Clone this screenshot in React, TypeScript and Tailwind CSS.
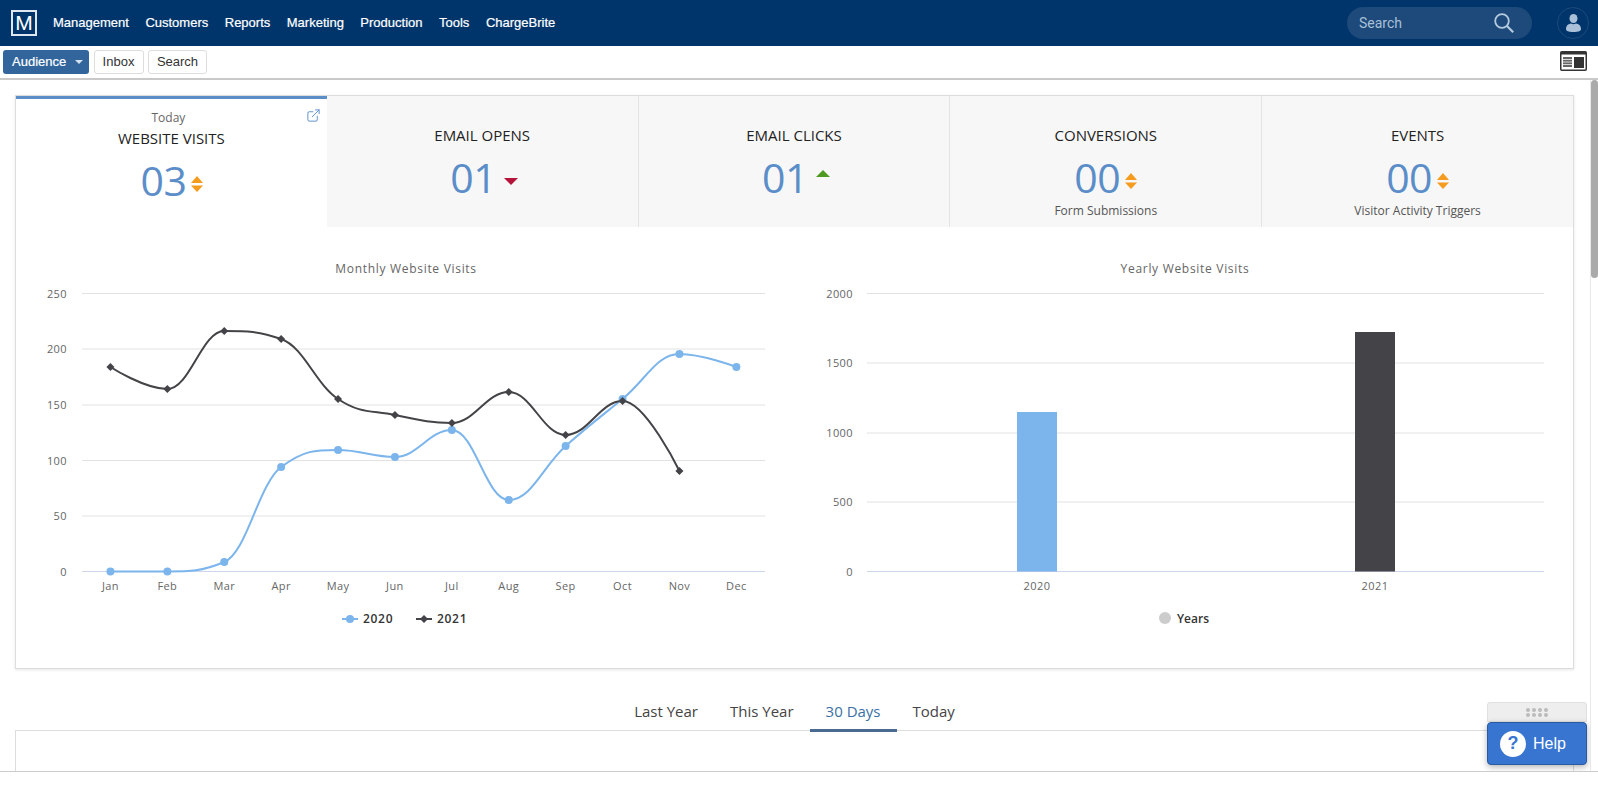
import { ExternalLink } from "lucide-react";

const navItems = ["Management", "Customers", "Reports", "Marketing", "Production", "Tools", "ChargeBrite"];
const months = ["Jan", "Feb", "Mar", "Apr", "May", "Jun", "Jul", "Aug", "Sep", "Oct", "Nov", "Dec"];
const monthX = months.map((_, i) => 82 + 56.9 * (i + 0.5));

const visits2020 = [571.5, 571.5, 562, 467, 450, 457, 430, 500, 446, 399, 354, 367];
const visits2021 = [367, 389, 331, 339, 399, 415, 423, 392, 435, 401, 471];

const leftAxis = [
  { label: "250", y: 293.5 },
  { label: "200", y: 349 },
  { label: "150", y: 405 },
  { label: "100", y: 460.5 },
  { label: "50", y: 516 },
  { label: "0", y: 571.5 },
];
const rightAxis = [
  { label: "2000", y: 293.5 },
  { label: "1500", y: 363 },
  { label: "1000", y: 433 },
  { label: "500", y: 502 },
  { label: "0", y: 571.5 },
];

// same smoothing the chart library uses for spline series
function splinePath(ys: number[]) {
  const pts = ys.map((y, i) => ({ x: monthX[i], y }));
  const conts = pts.map((p, i) => {
    const last = pts[i - 1];
    const next = pts[i + 1];
    if (!last || !next) return { lx: p.x, ly: p.y, rx: p.x, ry: p.y };
    const lx = (1.5 * p.x + last.x) / 2.5;
    let ly = (1.5 * p.y + last.y) / 2.5;
    const rx = (1.5 * p.x + next.x) / 2.5;
    let ry = (1.5 * p.y + next.y) / 2.5;
    const correction = ((ry - ly) * (rx - p.x)) / (rx - lx) + p.y - ry;
    ly += correction;
    ry += correction;
    if (ly > last.y && ly > p.y) {
      ly = Math.max(last.y, p.y);
      ry = 2 * p.y - ly;
    } else if (ly < last.y && ly < p.y) {
      ly = Math.min(last.y, p.y);
      ry = 2 * p.y - ly;
    }
    if (ry > next.y && ry > p.y) {
      ry = Math.max(next.y, p.y);
      ly = 2 * p.y - ry;
    } else if (ry < next.y && ry < p.y) {
      ry = Math.min(next.y, p.y);
      ly = 2 * p.y - ry;
    }
    return { lx, ly, rx, ry };
  });
  return pts
    .map((p, i) =>
      i === 0
        ? `M ${p.x} ${p.y}`
        : `C ${conts[i - 1].rx} ${conts[i - 1].ry} ${conts[i].lx} ${conts[i].ly} ${p.x} ${p.y}`
    )
    .join(" ");
}

function Both() {
  return (
    <svg width="12" height="16" viewBox="0 0 12 16" className="fill-[#f59c1f] mt-[8px]">
      <path d="M6 0 12 7H0Z" />
      <path d="M0 9.5H12L6 16Z" />
    </svg>
  );
}

function Down() {
  return (
    <svg width="14" height="7" viewBox="0 0 14 7" className="fill-[#b5133a]">
      <path d="M0 0H14L7 7Z" />
    </svg>
  );
}

function Up() {
  return (
    <svg width="14" height="7" viewBox="0 0 14 7" className="fill-[#4c9a1f]">
      <path d="M7 0 14 7H0Z" />
    </svg>
  );
}

function StatTab({
  title,
  value,
  note,
  children,
  last,
  valueClass = "",
}: {
  title: string;
  value: string;
  note?: string;
  children: React.ReactNode;
  last?: boolean;
  valueClass?: string;
}) {
  return (
    <div className={`flex-1 h-[131px] bg-[#f7f7f7] flex flex-col items-center pt-[29px] ${last ? "" : "border-r border-[#e4e4e4]"}`}>
      <div className="text-[15px] leading-[20px] text-[#222]">{title}</div>
      <div className="flex items-center gap-[5px] mt-[9px] h-[46px]">
        <span className={`text-[41px] leading-[46px] tracking-[-0.5px] text-[#5b8ec9] ${valueClass}`}>{value}</span>
        {children}
      </div>
      {note && <div className="text-[12px] leading-[16px] text-[#555] mt-[3px]">{note}</div>}
    </div>
  );
}

function MonthlyChart() {
  const label = "fill-[#666666] text-[11px] tracking-[0.4px]";
  return (
    <svg width="778" height="441" className="block">
      <g transform="translate(-16,-227)">
        <text x="406" y="273" textAnchor="middle" className="fill-[#666666] text-[12px] tracking-[0.7px]">
          Monthly Website Visits
        </text>
        {leftAxis.map((a) => (
          <g key={a.label}>
            <line x1="82" x2="765" y1={a.y} y2={a.y} stroke={a.label === "0" ? "#ccd6eb" : "#e2e2e2"} />
            <text x="67" y={a.y + 4} textAnchor="end" className={label}>
              {a.label}
            </text>
          </g>
        ))}
        {months.map((m, i) => (
          <text key={m} x={monthX[i]} y="590" textAnchor="middle" className={label}>
            {m}
          </text>
        ))}
        <path d={splinePath(visits2020)} fill="none" stroke="#7cb5ec" strokeWidth="2" />
        <path d={splinePath(visits2021)} fill="none" stroke="#434348" strokeWidth="2" />
        {visits2020.map((y, i) => (
          <circle key={i} cx={monthX[i]} cy={y} r="4" fill="#7cb5ec" />
        ))}
        {visits2021.map((y, i) => (
          <path key={i} d={`M ${monthX[i]} ${y - 4} l 4 4 l -4 4 l -4 -4 Z`} fill="#434348" />
        ))}
        <line x1="342" x2="358" y1="619" y2="619" stroke="#7cb5ec" strokeWidth="2" />
        <circle cx="350" cy="619" r="4" fill="#7cb5ec" />
        <text x="363" y="623" className="fill-[#333333] text-[12px] font-semibold tracking-[0.7px]">
          2020
        </text>
        <line x1="416" x2="432" y1="619" y2="619" stroke="#434348" strokeWidth="2" />
        <path d="M 424 615 l 4 4 l -4 4 l -4 -4 Z" fill="#434348" />
        <text x="437" y="623" className="fill-[#333333] text-[12px] font-semibold tracking-[0.7px]">
          2021
        </text>
      </g>
    </svg>
  );
}

function YearlyChart() {
  const label = "fill-[#666666] text-[11px] tracking-[0.4px]";
  return (
    <svg width="779" height="441" className="block">
      <g transform="translate(-794,-227)">
        <text x="1185" y="273" textAnchor="middle" className="fill-[#666666] text-[12px] tracking-[0.7px]">
          Yearly Website Visits
        </text>
        {rightAxis.map((a) => (
          <g key={a.label}>
            <line x1="867" x2="1544" y1={a.y} y2={a.y} stroke={a.label === "0" ? "#ccd6eb" : "#e2e2e2"} />
            <text x="853" y={a.y + 4} textAnchor="end" className={label}>
              {a.label}
            </text>
          </g>
        ))}
        <rect x="1017" y="412" width="40" height="159.5" fill="#7cb5ec" />
        <rect x="1355" y="332" width="40" height="239.5" fill="#434348" />
        <text x="1037" y="590" textAnchor="middle" className={label}>
          2020
        </text>
        <text x="1375" y="590" textAnchor="middle" className={label}>
          2021
        </text>
        <circle cx="1165" cy="618" r="6" fill="#cccccc" />
        <text x="1177" y="623" className="fill-[#333333] text-[12px] font-semibold">
          Years
        </text>
      </g>
    </svg>
  );
}

export default function App() {
  return (
    <div className="h-[786px] w-full overflow-hidden bg-white flex flex-col font-['Open_Sans',sans-serif]">
      <header className="h-[46px] shrink-0 bg-[#00356b] flex items-center font-['Liberation_Sans',sans-serif]">
        <div className="ml-[11px] w-[26px] h-[26px] border-2 border-[#dfe8f1] text-white text-[21px] leading-[22px] text-center">M</div>
        <nav className="flex items-center gap-[16.5px] ml-[16px]">
          {navItems.map((item) => (
            <a key={item} className="text-white text-[13px] [-webkit-text-stroke:0.2px_white]">
              {item}
            </a>
          ))}
        </nav>
        <div className="ml-auto w-[185px] h-[32px] rounded-full bg-[#1d4a7a] flex items-center justify-between pl-[12px] pr-[18px] font-['Roboto',sans-serif]">
          <span className="text-[14px] text-[#a9c0d8]">Search</span>
          <svg width="20" height="20" viewBox="0 0 20 20" fill="none" stroke="#b5cadf">
            <circle cx="8" cy="8" r="6.8" strokeWidth="1.8" />
            <path d="M13 13 19.2 19.2" strokeWidth="2.2" />
          </svg>
        </div>
        <div className="ml-[25px] mr-[9px] w-[32px] h-[32px] rounded-full border border-[#1d4a7a] flex items-center justify-center">
          <svg width="15" height="18" viewBox="0 0 15 18" fill="#a9c0d8">
            <ellipse cx="7.5" cy="4.5" rx="4" ry="4.5" />
            <path d="M0 15C0 11.5 2.5 9.8 5 9.5 6.5 10.5 8.5 10.5 10 9.5 12.5 9.8 15 11.5 15 15 15 17 13 18 7.5 18 2 18 0 17 0 15Z" />
          </svg>
        </div>
      </header>

      <div className="h-[34px] shrink-0 border-b-2 border-[#c9c9c9] flex items-start pt-[4px] pl-[3px] gap-[4.5px] font-['Liberation_Sans',sans-serif] text-[13px]">
        <button className="h-[24px] w-[86px] rounded-[3px] bg-[#31659c] text-white flex items-center pl-[9px] [-webkit-text-stroke:0.2px_white]">
          Audience
          <span className="ml-[9px] border-x-[4px] border-x-transparent border-t-[4px] border-t-[#d5e1ee]" />
        </button>
        <button className="h-[24px] w-[50px] rounded-[3px] border border-[#dddddd] bg-white text-[#333]">Inbox</button>
        <button className="h-[24px] w-[59px] rounded-[3px] border border-[#dddddd] bg-white text-[#333]">Search</button>
        <svg width="27" height="20" viewBox="0 0 27 20" className="ml-auto mr-[11px] mt-[1px]">
          <rect x="0.75" y="0.75" width="25.5" height="18.5" rx="1" fill="#ffffff" stroke="#333333" strokeWidth="1.5" />
          <rect x="1" y="1" width="25" height="2.5" fill="#333333" />
          <rect x="3" y="6" width="9" height="10" fill="#666666" />
          <path d="M3 8.5H12M3 11H12M3 13.5H12" stroke="#ffffff" strokeWidth="0.75" />
          <rect x="14" y="6" width="10" height="11" fill="#333333" />
        </svg>
      </div>

      <div className="h-[692px] shrink-0 flex border-b border-[#cccccc]">
        <main className="flex-1 overflow-hidden pt-[15px] pl-[15px] relative">
          <section className="w-[1559px] h-[574px] border border-[#dddddd] shadow-[0_1px_3px_rgba(0,0,0,0.1)]">
            <div className="flex">
              <div className="flex-1 h-[131px] bg-white border-t-[3px] border-[#5b8ec9] flex flex-col items-center relative">
                <div className="text-[12px] leading-[16px] text-[#666] mt-[11px] mr-[6px]">Today</div>
                <div className="text-[15px] leading-[20px] text-[#222] mt-[2px]">WEBSITE VISITS</div>
                <div className="flex items-center gap-[5px] mt-[9px] h-[46px]">
                  <span className="text-[41px] leading-[46px] tracking-[-0.5px] text-[#5b8ec9] ml-[1px]">03</span>
                  <Both />
                </div>
                <ExternalLink className="absolute top-[9px] right-[6px] w-[15px] h-[15px] text-[#5b8ec9]" strokeWidth={1.5} />
              </div>
              <StatTab title="EMAIL OPENS" value="01" valueClass="ml-[4px]">
                <div className="ml-[3px] mt-[8px]">
                  <Down />
                </div>
              </StatTab>
              <StatTab title="EMAIL CLICKS" value="01" valueClass="ml-[4px]">
                <div className="ml-[3px] mb-[8px]">
                  <Up />
                </div>
              </StatTab>
              <StatTab title="CONVERSIONS" value="00" note="Form Submissions">
                <Both />
              </StatTab>
              <StatTab title="EVENTS" value="00" note="Visitor Activity Triggers" last>
                <Both />
              </StatTab>
            </div>
            <div className="grid grid-cols-[778px_779px]">
              <MonthlyChart />
              <YearlyChart />
            </div>
          </section>

          <div className="h-[61px] flex items-end justify-center relative z-10 w-[1559px]">
            <div className="flex text-[15px] leading-[20px] text-[#444] -mb-[2px]">
              <a className="px-[16px] h-[42px] pt-[11px]">Last Year</a>
              <a className="px-[16px] h-[42px] pt-[11px]">This Year</a>
              <a className="px-[16px] h-[42px] pt-[11px] text-[#3a70a5] border-b-[3px] border-[#4a6a8f]">30 Days</a>
              <a className="px-[16px] h-[42px] pt-[11px]">Today</a>
            </div>
          </div>
          <section className="w-[1559px] h-[300px] border border-[#dddddd]" />

          <div className="absolute right-[3px] bottom-[6px] w-[100px] z-20">
            <div className="h-[20px] bg-[#eeeeee] border border-[#e0e0e0] rounded-t-[3px] flex items-center justify-center">
              <div className="grid grid-cols-4 gap-x-[2px] gap-y-[1px]">
                {Array.from({ length: 8 }).map((_, i) => (
                  <span key={i} className="w-[4px] h-[4px] rounded-full bg-[#bbbbbb]" />
                ))}
              </div>
            </div>
            <div className="h-[43px] bg-[#3875d1] border border-[#2a5a9f] rounded-[4px] shadow-[0_2px_6px_rgba(0,0,0,0.3)] flex items-center pl-[12px] gap-[7px] font-['Liberation_Sans',sans-serif]">
              <span className="w-[26px] h-[26px] rounded-full bg-white text-[#3875d1] text-[18px] font-bold flex items-center justify-center">?</span>
              <span className="text-white text-[16px]">Help</span>
            </div>
          </div>
        </main>
        <div className="w-[8px] shrink-0 border-l border-[#e8e8e8] bg-white">
          <div className="h-[198px] bg-[#aaaaaa] rounded-[4px]" />
        </div>
      </div>
    </div>
  );
}
